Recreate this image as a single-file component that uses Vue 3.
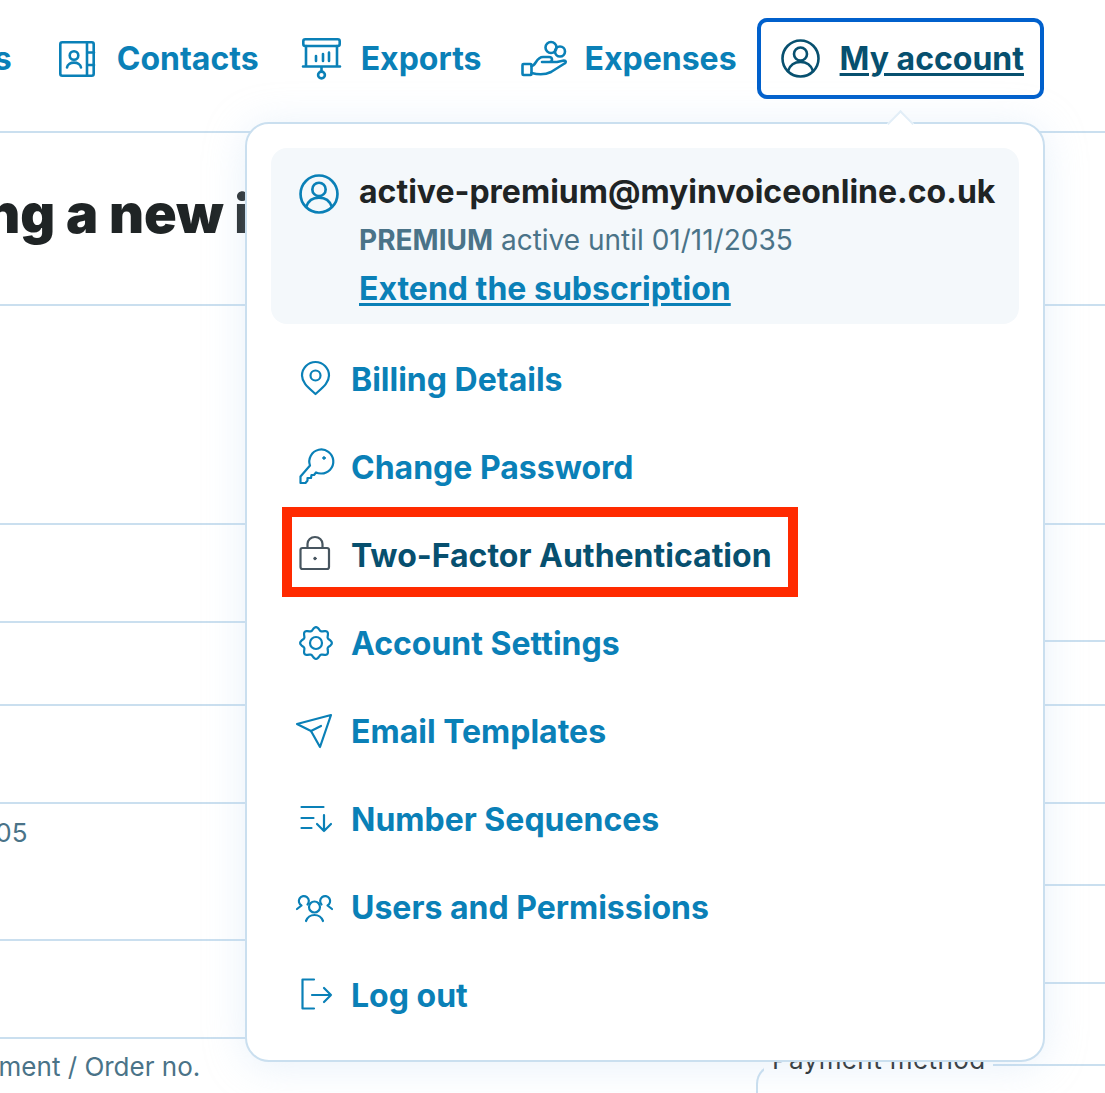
<script setup>
const leftRows = [173, 219, 98, 83, 98, 137, 98]
const rightRows = [173, 219, 117, 64, 98, 82, 98]

const menu = [
  { label: 'Billing Details', icon: 'pin' },
  { label: 'Change Password', icon: 'key' },
  { label: 'Two-Factor Authentication', icon: 'lock', current: true },
  { label: 'Account Settings', icon: 'gear' },
  { label: 'Email Templates', icon: 'send' },
  { label: 'Number Sequences', icon: 'sort' },
  { label: 'Users and Permissions', icon: 'users' },
  { label: 'Log out', icon: 'logout' },
]

// wavy outline for the gear, 8 teeth
const gearPath = (() => {
  const pts = []
  for (let i = 0; i < 72; i++) {
    const a = (i / 72) * Math.PI * 2
    const r = 14.3 + 1.6 * Math.cos(8 * a)
    pts.push(`${(17 + r * Math.cos(a)).toFixed(2)} ${(18 + r * Math.sin(a)).toFixed(2)}`)
  }
  return 'M' + pts.join('L') + 'z'
})()
</script>

<template>
  <div class="page">
    <header class="topbar">
      <nav class="nav">
        <a class="nav-link first">Invoices</a>
        <a class="nav-link contacts">
          <svg width="36" height="36" viewBox="0 0 36 36" class="ico">
            <rect x="1.300" y="1.300" width="33.400" height="33.400" rx="2" />
            <path d="M28 1.300v33.400M28 11.500h7M28 24h7" />
            <circle cx="15" cy="14.500" r="4.300" />
            <path d="M8 26.500c1-6.500 13-6.500 14 0" />
          </svg>
          Contacts
        </a>
        <a class="nav-link exports">
          <svg width="39" height="42" viewBox="0 0 39 42" class="ico">
            <rect x="1.300" y="1.300" width="36.400" height="6.700" rx="2" />
            <path d="M4 8v20M35 8v20M1 28.500h37M19.500 28.500v5M14 18v5M21 16v7M27 14.500v8.500" />
            <circle cx="19.500" cy="37" r="3.400" />
          </svg>
          Exports
        </a>
        <a class="nav-link expenses">
          <svg width="46" height="38" viewBox="0 0 46 38" class="ico">
            <rect x="1.500" y="24" width="9" height="11" rx="1" />
            <path d="M10.500 26C15 26 15 17 22 17h6c4 0 4 5 0 5h-7M28 22h8l7-1.500c2 0 2.500 2 .5 3L30 32c-6 3-12 3-19.500 1" />
            <circle cx="30" cy="7.500" r="5.500" />
            <circle cx="39" cy="11.500" r="5" />
          </svg>
          Expenses
        </a>
        <a class="nav-link account-link">
          <svg width="39" height="39" viewBox="0 0 39 39" class="ico dark">
            <circle cx="19.500" cy="19.500" r="18" />
            <circle cx="19.500" cy="15" r="6.500" />
            <path d="M7 32c2-6 7-9 12.500-9s10.500 3 12.500 9" />
          </svg>
          <span>My account</span>
        </a>
      </nav>
    </header>

    <main class="content">
      <div class="col col-left">
        <div class="row" v-for="(h, i) in leftRows" :key="i" :style="{ height: h + 'px' }">
          <h1 v-if="i === 0" class="title">Creating a new invoice</h1>
          <span v-if="i === 5" class="date">2005</span>
        </div>
        <p class="doc-label">Document / Order no.</p>
      </div>

      <div class="col col-right">
        <div class="row" v-for="(h, i) in rightRows" :key="i" :style="{ height: h + 'px' }"></div>
        <div class="field">
          <span class="field-label">Payment method</span>
        </div>
      </div>

      <section class="popup">
        <span class="arrow"></span>
        <div class="user-box">
          <svg width="40" height="40" viewBox="0 0 39 39" class="ico user-ico">
            <circle cx="19.500" cy="19.500" r="18" />
            <circle cx="19.500" cy="15" r="6.500" />
            <path d="M7 32c2-6 7-9 12.500-9s10.500 3 12.500 9" />
          </svg>
          <div>
            <div class="email">active-premium@myinvoiceonline.co.uk</div>
            <div class="plan"><b>PREMIUM</b> active until 01/11/2035</div>
            <a class="extend">Extend the subscription</a>
          </div>
        </div>

        <ul class="menu">
          <li v-for="item in menu" :key="item.label" class="menu-item" :class="{ current: item.current }">
            <span class="menu-icon">
              <svg width="34" height="36" viewBox="0 0 34 36" class="ico thin">
                <template v-if="item.icon === 'pin'">
                  <path d="M16.500 33C10 27 3 22 3 14.500a13.500 13.500 0 0 1 27 0C30 22 23 27 16.500 33z" />
                  <circle cx="16.500" cy="14.500" r="5" />
                </template>
                <template v-else-if="item.icon === 'key'">
                  <path d="M11 16.500 1.500 27.500V34h5l2-2.500V29H12l.5-3H15l2-2.500c2 1 3.500 1 5 1a12 12 0 1 0-11-8z" />
                  <circle cx="25" cy="9" r="1.300" class="dot" />
                </template>
                <template v-else-if="item.icon === 'lock'">
                  <rect x="1.500" y="11" width="28.500" height="21" rx="2" />
                  <path d="M8.500 11V7a7.500 7 0 0 1 15 0v4" />
                  <circle cx="16" cy="21.500" r="1.300" class="dot" />
                </template>
                <template v-else-if="item.icon === 'gear'">
                  <path :d="gearPath" />
                  <circle cx="17" cy="18" r="6" />
                </template>
                <template v-else-if="item.icon === 'send'">
                  <path d="M-2 11 32 2 21 34 12 18z" />
                  <path d="M12 18 22 13" />
                </template>
                <template v-else-if="item.icon === 'sort'">
                  <path d="M2.500 6h22M2.500 17h12M2.500 27h10M25 14v16M18 23l7 7 7-7" />
                </template>
                <template v-else-if="item.icon === 'users'">
                  <circle cx="15.500" cy="18" r="5.500" />
                  <path d="M7 32c1.500-4 5-6 8.500-6s7 2 8.500 6M8.500 15.500A5 5 0 1 0 2.500 16.500L-2 20M22.500 15.500A5 5 0 1 1 28.500 16.500L33 20" />
                </template>
                <template v-else>
                  <path d="M15 2.500H3.500v29H15M13 18h19M25 11l7 7-7 7" />
                </template>
              </svg>
            </span>
            <span>{{ item.label }}</span>
            <i v-if="item.current" class="red-box"></i>
          </li>
        </ul>
      </section>
    </main>
  </div>
</template>

<style>
html, body {
  margin: 0;
  background: #fff;
  overflow: hidden;
}
</style>

<style scoped>
.page {
  width: 1105px;
  height: 1093px;
  overflow: hidden;
  font-family: Inter, "Liberation Sans", sans-serif;
  color: #1f2425;
}

.topbar {
  height: 131px;
  border-bottom: 2px solid #cadfef;
}
.nav {
  display: flex;
  justify-content: flex-end;
  padding: 18px 61px 0 0;
}
.nav-link {
  display: flex;
  align-items: center;
  gap: 20px;
  height: 81px;
  padding: 0 20px;
  font-size: 32px;
  font-weight: 650;
  white-space: nowrap;
  color: #0a80b7;
}
.first {
  margin-right: 7px;
}
.contacts {
  gap: 22px;
  margin-right: 3px;
}
.exports {
  padding-right: 19px;
}
.expenses {
  gap: 18px;
}
.account-link {
  box-sizing: border-box;
  padding: 0 16px 0 20px;
  border: 4px solid #0060cc;
  border-radius: 10px;
  color: #07506f;
  text-decoration: underline;
  text-underline-offset: 3px;
}

.ico {
  flex: none;
  overflow: visible;
  fill: none;
  stroke: #0a80b7;
  stroke-width: 2.6;
  stroke-linecap: round;
  stroke-linejoin: round;
}
.ico.dark {
  stroke: #07506f;
}
.ico.thin {
  stroke-width: 2.2;
}
.dot {
  fill: currentColor;
  stroke-width: 1;
}

.content {
  position: relative;
  display: flex;
  justify-content: space-between;
}
.col-left {
  width: 246px;
  overflow: hidden;
}
.col-right {
  width: 349px;
}
.row {
  box-sizing: border-box;
  display: flow-root;
  border-bottom: 2px solid #cadfef;
}
.title {
  margin: 50px 0 0 -180px;
  font-size: 54px;
  font-weight: 900;
  line-height: 62px;
  white-space: nowrap;
}
.date {
  display: block;
  margin: 13px 0 0 -37px;
  font-size: 26px;
  line-height: 32px;
  color: #4a7388;
}
.doc-label {
  margin: 12px 0 0 -66px;
  font-size: 26px;
  line-height: 32px;
  white-space: nowrap;
  color: #4a7388;
}

.field {
  position: relative;
  height: 80px;
  margin-top: 80px;
  border: 2px solid #cadfef;
  border-right: 0;
  border-radius: 20px 0 0 0;
}
.field-label {
  position: absolute;
  left: 6px;
  top: -22px;
  padding: 0 8px;
  background: #fff;
  font-size: 26px;
  line-height: 32px;
  letter-spacing: 0.4px;
}

.popup {
  position: absolute;
  top: -11px;
  left: 245px;
  box-sizing: border-box;
  width: 800px;
  height: 940px;
  padding: 24px 24px 0;
  background: #fff;
  border: 2px solid #cadfef;
  border-radius: 24px;
  box-shadow: 0 4px 40px rgba(190, 215, 240, 0.35);
}
.arrow {
  position: absolute;
  top: -10px;
  left: 644px;
  width: 17px;
  height: 17px;
  background: #fff;
  border-top: 2px solid #e2eef7;
  border-left: 2px solid #e2eef7;
  transform: rotate(45deg);
}

.user-box {
  display: flex;
  gap: 20px;
  height: 176px;
  box-sizing: border-box;
  padding: 23px 0 0 28px;
  background: #f4f8fb;
  border-radius: 16px;
}
.user-ico {
  margin-top: 3px;
}
.email {
  font-size: 32px;
  line-height: 42px;
  font-weight: 650;
}
.plan {
  margin-top: 7px;
  font-size: 28px;
  line-height: 40px;
  color: #4a7388;
}
.plan b {
  font-weight: 650;
}
.extend {
  display: block;
  margin-top: 8px;
  font-size: 32px;
  line-height: 42px;
  font-weight: 650;
  color: #0a80b7;
  text-decoration: underline;
  text-underline-offset: 3px;
}

.menu {
  list-style: none;
  margin: 11px 0 0;
  padding: 0 0 0 28px;
}
.menu-item {
  position: relative;
  display: flex;
  align-items: center;
  gap: 18px;
  width: fit-content;
  height: 88px;
  font-size: 32px;
  font-weight: 650;
  color: #0a80b7;
}
.menu-icon {
  display: flex;
  color: #0a80b7;
}
.menu-item.current {
  color: #07506f;
}
.menu-item.current .ico {
  stroke: #47555f;
}
.menu-item.current .menu-icon {
  color: #47555f;
}
.red-box {
  position: absolute;
  inset: -4px -26px 2px -17px;
  border: 10px solid #ff2a00;
}
</style>
